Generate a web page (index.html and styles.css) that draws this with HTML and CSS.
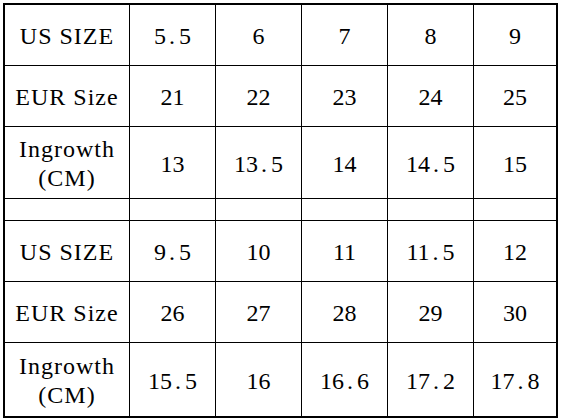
FILE: index.html
```html
<!DOCTYPE html>
<html>
<head>
<meta charset="utf-8">
<link rel="stylesheet" href="styles.css">
</head>
<body>
<div class="size-grid">
  <div class="cell label">US SIZE</div><div class="cell">5<span class="dot">.</span>5</div><div class="cell">6</div><div class="cell">7</div><div class="cell">8</div><div class="cell">9</div>
  <div class="cell label">EUR Size</div><div class="cell">21</div><div class="cell">22</div><div class="cell">23</div><div class="cell">24</div><div class="cell">25</div>
  <div class="cell label two">Ingrowth<br>(CM)</div><div class="cell">13</div><div class="cell">13<span class="dot">.</span>5</div><div class="cell">14</div><div class="cell">14<span class="dot">.</span>5</div><div class="cell">15</div>
  <div class="cell"></div><div class="cell"></div><div class="cell"></div><div class="cell"></div><div class="cell"></div><div class="cell"></div>
  <div class="cell label">US SIZE</div><div class="cell">9<span class="dot">.</span>5</div><div class="cell">10</div><div class="cell">11</div><div class="cell">11<span class="dot">.</span>5</div><div class="cell">12</div>
  <div class="cell label">EUR Size</div><div class="cell">26</div><div class="cell">27</div><div class="cell">28</div><div class="cell">29</div><div class="cell">30</div>
  <div class="cell label two">Ingrowth<br>(CM)</div><div class="cell">15<span class="dot">.</span>5</div><div class="cell">16</div><div class="cell">16<span class="dot">.</span>6</div><div class="cell">17<span class="dot">.</span>2</div><div class="cell">17<span class="dot">.</span>8</div>
</div>
</body>
</html>
```

FILE: styles.css
```css
html, body {
  margin: 0;
  padding: 0;
  background: #ffffff;
}
body {
  padding: 3px 0 0 3px;
}
.size-grid {
  display: grid;
  grid-template-columns: 124px 85px 85px 85px 85px 82px;
  grid-template-rows: 60px 60px 71px 21px 60px 60px 73px;
  gap: 1px;
  padding: 2px;
  width: 551px;
  background: #000000;
  font-family: "Liberation Serif";
  font-size: 24px;
  color: #000000;
}
.cell {
  background: #ffffff;
  display: flex;
  align-items: center;
  justify-content: center;
  text-align: center;
  line-height: 28px;
  padding-top: 2px;
  font-family: "Liberation Serif";
}
.label {
  letter-spacing: 1px;
}
.two {
  line-height: 29px;
}
.dot {
  margin: 0 4px 0 3px;
}
```
